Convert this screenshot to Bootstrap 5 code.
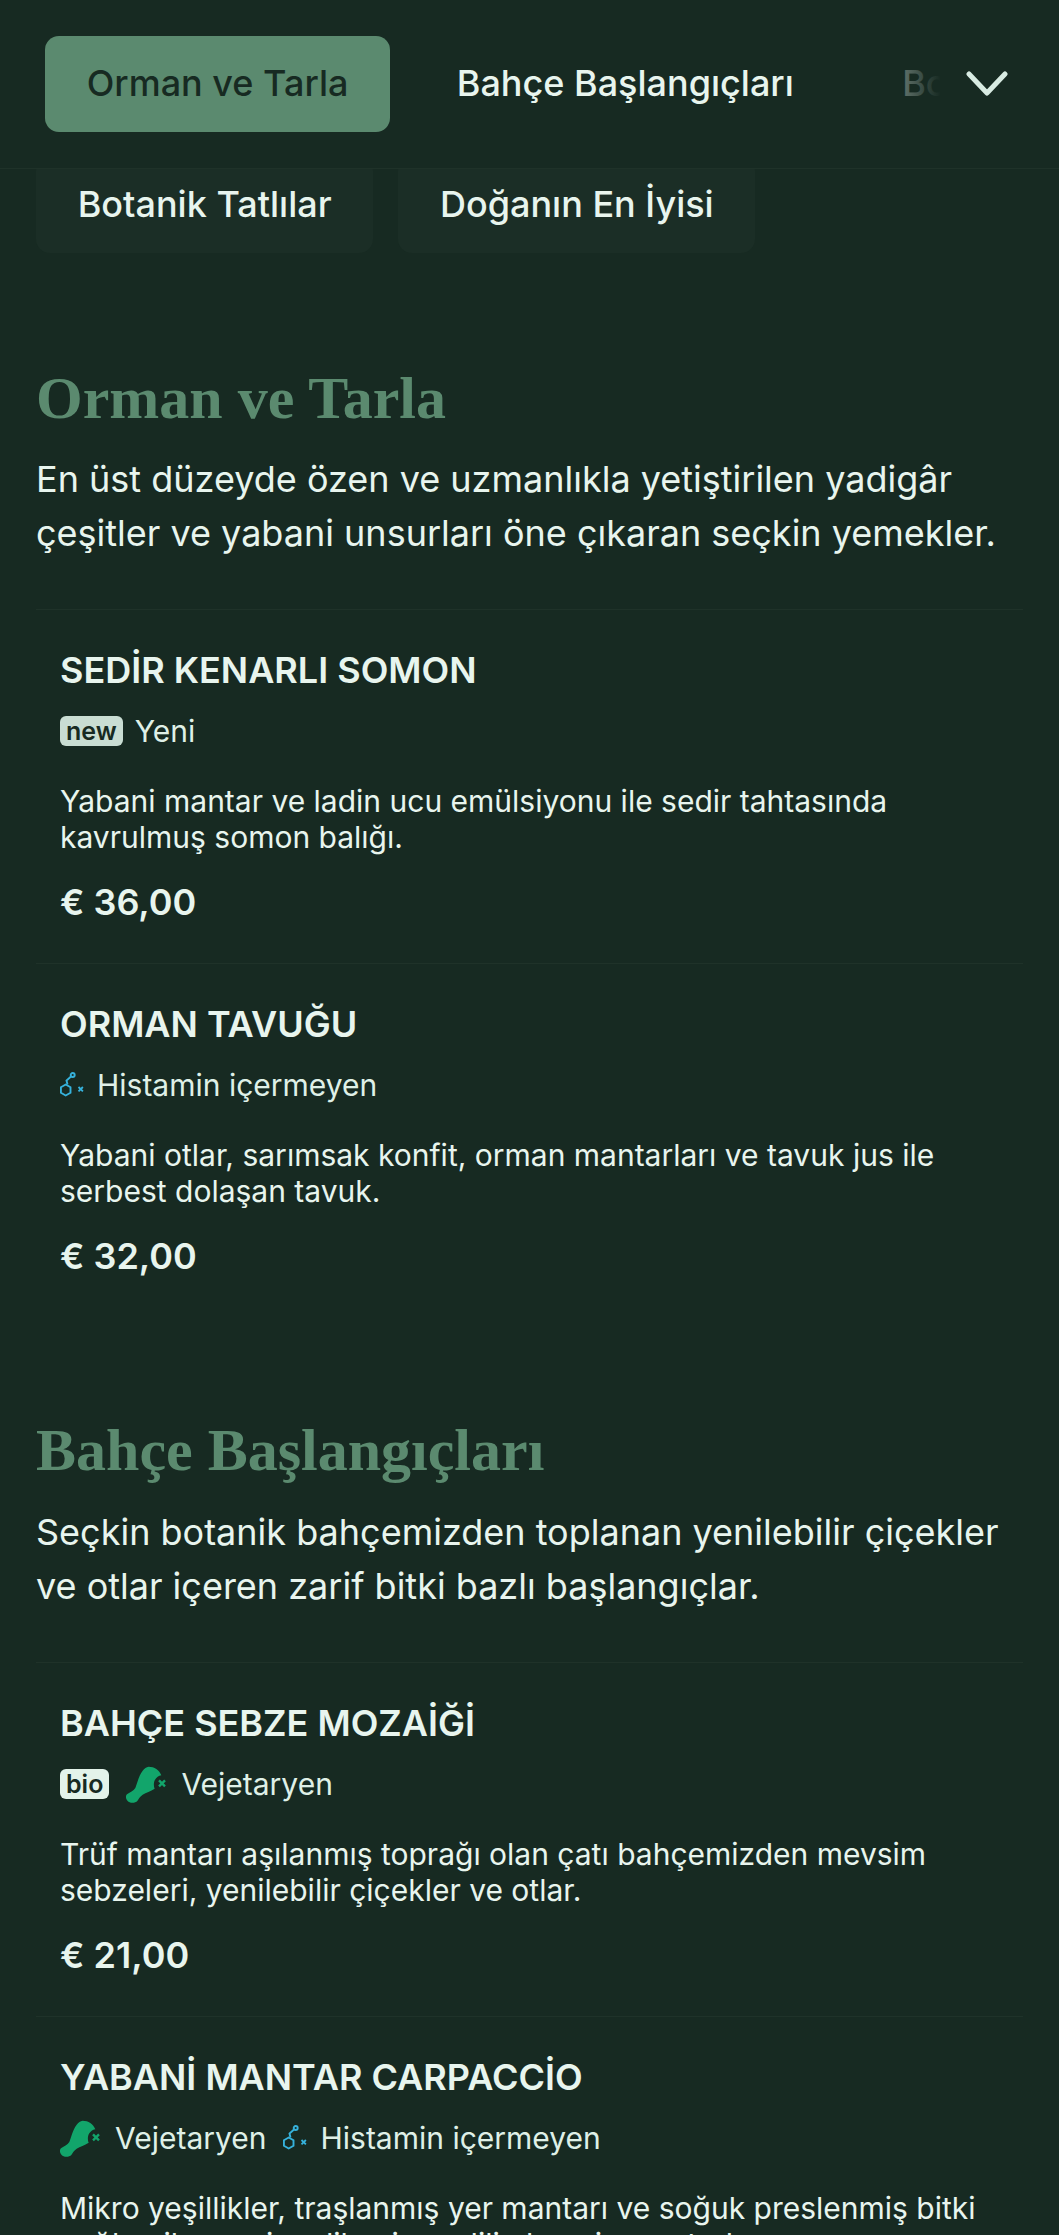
<!DOCTYPE html>
<html lang="tr">
<head>
<meta charset="utf-8">
<link href="https://cdn.jsdelivr.net/npm/bootstrap@5.3.0/dist/css/bootstrap.min.css" rel="stylesheet">
<style>
html,body{background:#172a22;}
body{font-family:Inter,"Noto Sans",sans-serif;color:#e8f5ee;overflow:hidden;height:2235px;}
.topbar{height:169px;padding:36px 45px 0;border-bottom:1px solid #1f3229;position:relative;overflow:hidden;gap:25px;}
.tabbtn{flex:none;height:96px;padding:0 41.700px;font-size:36px;line-height:94px;border-radius:14px;color:#e8f5ee;white-space:nowrap;font-weight:500;}
.tabon{background:#5b8a6f;color:#172a22;}
.fadebar{position:absolute;top:0;right:0;bottom:0;width:160px;background:linear-gradient(90deg,rgba(23,42,34,.62),#172a22 26%);}
.chev{position:absolute;top:70px;right:51px;width:42px;height:28px;}
.tabrow{height:84px;overflow:hidden;padding:0 36px;gap:25px;}
.tabrow .tabbtn{margin-top:-12px;background:#1b2e26;height:96px;}
.sect{padding:0 36px;}
.sect1{margin-top:109px;}
.sect2{margin-top:97px;}
.sechead{font-family:"Liberation Serif",serif;font-weight:700;font-size:60px;line-height:72px;color:#5b8a6f;margin:0 0 18px;}
.sect2 .sechead{margin-bottom:19px;}
.secsub{font-size:36px;line-height:54px;margin:0 0 49px;color:#e8f5ee;}
.dish{border-top:1px solid #1f3229;padding:35px 24px 0;height:354px;}
.dishname{font-size:36px;font-weight:600;line-height:50px;margin:0 0 12px;color:#e8f5ee;}
.tagrow{height:48px;gap:12px;font-size:30px;line-height:47px;margin-bottom:28px;color:#dff0e7;}
.chip{font-size:25px;font-weight:600;line-height:30px;padding:0 6px;border-radius:6px;background:#c9ddd3;color:#172a22;}
.chipbio{background:#e3f3ea;}
.dishtxt{font-size:30px;line-height:36px;margin:0 0 22px;color:#e8f5ee;}
.dishprice{font-size:36px;font-weight:600;line-height:50px;color:#e8f5ee;}
.ic1{width:44px;height:37px;flex:none;margin-right:-1px;}
.ic2{width:24px;height:26px;flex:none;margin-right:1px;}
.tagitem{gap:12px;}
.tagrow>*+.tagitem{margin-left:5px;}
</style>
</head>
<body>
<svg width="0" height="0" class="position-absolute">
<defs>
<symbol id="drum" viewBox="0 0 132 111">
<path d="M68 2C85 2 100 12 106 28C96 30 86 38 84 50C83 58 84 64 86 68C74 76 60 80 50 86C42 92 38 98 34 105C28 112 10 112 5 105C-2 98-2 88 4 84C12 78 22 76 28 66C34 50 38 30 50 14C55 7 61 3 68 2Z" fill="#12a56b"/>
<path d="M99 43l18 18m0-18l-18 18" stroke="#12a56b" stroke-width="7" fill="none"/>
</symbol>
<symbol id="mol" viewBox="0 0 24 26">
<g fill="none" stroke="#36b2dc" stroke-width="1.900">
<circle cx="12.700" cy="3" r="2"/>
<path d="M11 4.500L6.500 8.500L7.500 12.500"/>
<path d="M5.700 12.500l4.800 2.750v5.500l-4.800 2.750l-4.800-2.750v-5.500z"/>
</g>
<path d="M18.500 15l4.400 4.400m0-4.400l-4.400 4.400" stroke="#36b2dc" stroke-width="1.800" fill="none"/>
</symbol>
</defs>
</svg>
<nav class="topbar d-flex">
  <div class="tabbtn tabon">Orman ve Tarla</div>
  <div class="tabbtn">Bahçe Başlangıçları</div>
  <div class="tabbtn">Botanik Tatlılar</div>
  <div class="fadebar"></div>
  <svg class="chev" viewBox="0 0 42 28"><path d="M3 4L21 23L39 4" fill="none" stroke="#d8ebe2" stroke-width="5" stroke-linecap="round" stroke-linejoin="round"/></svg>
</nav>
<div class="tabrow d-flex">
  <div class="tabbtn">Botanik Tatlılar</div>
  <div class="tabbtn">Doğanın En İyisi</div>
</div>

<section class="sect sect1">
  <h2 class="sechead">Orman ve Tarla</h2>
  <p class="secsub">En üst düzeyde özen ve uzmanlıkla yetiştirilen yadigâr çeşitler ve yabani unsurları öne çıkaran seçkin yemekler.</p>
  <article class="dish">
    <div class="dishname">SEDİR KENARLI SOMON</div>
    <div class="tagrow d-flex align-items-center"><span class="chip">new</span><span>Yeni</span></div>
    <p class="dishtxt">Yabani mantar ve ladin ucu emülsiyonu ile sedir tahtasında kavrulmuş somon balığı.</p>
    <div class="dishprice">€ 36,00</div>
  </article>
  <article class="dish">
    <div class="dishname">ORMAN TAVUĞU</div>
    <div class="tagrow d-flex align-items-center"><span class="tagitem d-flex align-items-center"><svg class="ic2"><use href="#mol"/></svg>Histamin içermeyen</span></div>
    <p class="dishtxt">Yabani otlar, sarımsak konfit, orman mantarları ve tavuk jus ile serbest dolaşan tavuk.</p>
    <div class="dishprice">€ 32,00</div>
  </article>
</section>

<section class="sect sect2">
  <h2 class="sechead">Bahçe Başlangıçları</h2>
  <p class="secsub">Seçkin botanik bahçemizden toplanan yenilebilir çiçekler ve otlar içeren zarif bitki bazlı başlangıçlar.</p>
  <article class="dish">
    <div class="dishname">BAHÇE SEBZE MOZAİĞİ</div>
    <div class="tagrow d-flex align-items-center"><span class="chip chipbio">bio</span><span class="tagitem d-flex align-items-center"><svg class="ic1"><use href="#drum"/></svg>Vejetaryen</span></div>
    <p class="dishtxt">Trüf mantarı aşılanmış toprağı olan çatı bahçemizden mevsim sebzeleri, yenilebilir çiçekler ve otlar.</p>
    <div class="dishprice">€ 21,00</div>
  </article>
  <article class="dish">
    <div class="dishname">YABANİ MANTAR CARPACCİO</div>
    <div class="tagrow d-flex align-items-center"><span class="tagitem d-flex align-items-center"><svg class="ic1"><use href="#drum"/></svg>Vejetaryen</span><span class="tagitem d-flex align-items-center"><svg class="ic2"><use href="#mol"/></svg>Histamin içermeyen</span></div>
    <p class="dishtxt">Mikro yeşillikler, traşlanmış yer mantarı ve soğuk preslenmiş bitki yağları ile servis edilen ince dilimlenmiş mantarlar.</p>
  </article>
</section>
<script src="https://cdn.jsdelivr.net/npm/bootstrap@5.3.0/dist/js/bootstrap.bundle.min.js"></script>
</body>
</html>
